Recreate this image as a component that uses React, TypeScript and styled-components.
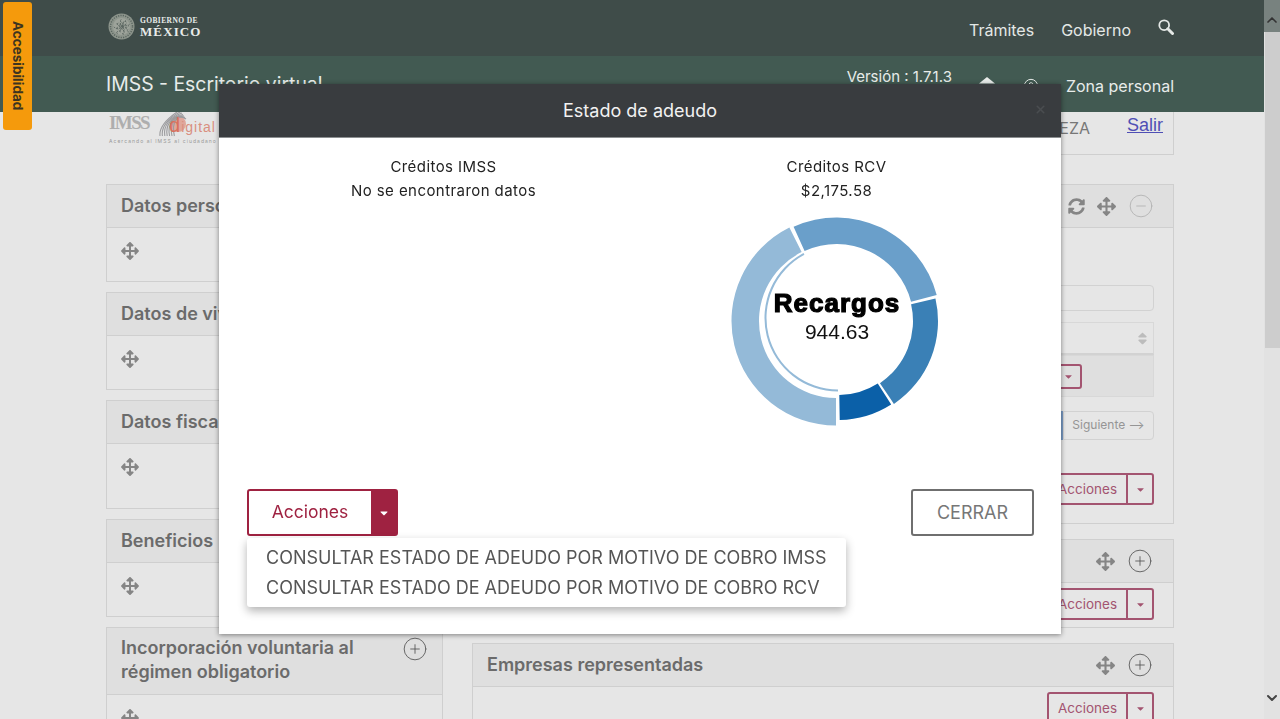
import React from 'react';
import styled, { createGlobalStyle } from 'styled-components';
import { FaArrowsAlt, FaSyncAlt, FaCaretDown, FaSort } from 'react-icons/fa';
import { CirclePlus, CircleMinus, CircleHelp, ChevronUp, ChevronDown, X } from 'lucide-react';

const GlobalStyle = createGlobalStyle`
  html, body {
    margin: 0;
    padding: 0;
    height: 100%;
    overflow: hidden;
    background: #e6e6e6;
  }
  body {
    font-family: "Inter", "Open Sans", sans-serif;
  }
`;

// angles are clockwise from north
function polar(cx: number, cy: number, r: number, a: number) {
  const rad = (a * Math.PI) / 180;
  return `${(cx + r * Math.sin(rad)).toFixed(2)} ${(cy - r * Math.cos(rad)).toFixed(2)}`;
}

function ring(cx: number, cy: number, ro: number, ri: number, a0: number, a1: number) {
  const big = a1 - a0 > 180 ? 1 : 0;
  return `M${polar(cx, cy, ro, a0)} A${ro} ${ro} 0 ${big} 1 ${polar(cx, cy, ro, a1)} L${polar(cx, cy, ri, a1)} A${ri} ${ri} 0 ${big} 0 ${polar(cx, cy, ri, a0)} Z`;
}

const slices = [
  { color: '#6a9fca', cx: 109.5, cy: 110, ro: 103.5, ri: 77, from: -24.5, to: 75.5 },
  { color: '#3a80b6', cx: 111, cy: 110, ro: 100, ri: 75, from: 77, to: 146 },
  { color: '#0b60a8', cx: 111, cy: 110, ro: 99, ri: 74, from: 147.5, to: 179 },
  { color: '#94bad8', cx: 109, cy: 110, ro: 104.5, ri: 77, from: 180, to: 333.5 },
];

function Donut() {
  return (
    <svg width="222" height="222" viewBox="0 0 222 222">
      {slices.map((s) => (
        <path key={s.color} d={ring(s.cx, s.cy, s.ro, s.ri, s.from, s.to)} fill={s.color} />
      ))}
      <path d={ring(111, 107, 73.5, 71.5, 180, 332)} fill="#94bad8" />
      <ChartLabel x="110" y="101" textAnchor="middle">Recargos</ChartLabel>
      <ChartValue x="110" y="128" textAnchor="middle">944.63</ChartValue>
    </svg>
  );
}

function EmblemGob() {
  const marks = Array.from({ length: 60 }, (_, i) => i * 47);
  return (
    <svg width="27" height="27" viewBox="0 0 27 27">
      <circle cx="13.5" cy="13.5" r="13" fill="#8d958c" />
      <circle cx="13.5" cy="13.5" r="11" fill="none" stroke="#59655f" strokeWidth="1.5" strokeDasharray="1.2 1.2" />
      <circle cx="13.5" cy="13.5" r="8.5" fill="#9da39a" />
      {marks.map((a, i) => (
        <path key={a} d={`M${polar(13.5, 13.5, (i * 0.37) % 8, a)} l1.4 ${i % 2 ? 1 : -1}`} stroke="#5c6862" strokeWidth="0.9" />
      ))}
    </svg>
  );
}

function Fingerprint() {
  return (
    <svg width="30" height="26" viewBox="0 0 30 26">
      <circle cx="20" cy="12" r="8" fill="#e0a79b" />
      {[0, 1, 2, 3, 4, 5, 6].map((i) => (
        <path key={i} d={`M${2 + i * 2.4} 24 C${1 + i * 2} ${16 - i} ${8 + i * 2} ${7 - i} ${22 + i} ${-2 + i * 1.5}`} fill="none" stroke="#9b9b9e" strokeWidth="1.1" />
      ))}
    </svg>
  );
}

function RoofIcon() {
  return (
    <svg width="20" height="20" viewBox="0 0 20 20">
      <path d="M10 1 L18 7.5 L2 7.5 Z" fill="#e8ecea" />
      <path d="M4 9 H16 V18 H4 Z" fill="#e8ecea" />
    </svg>
  );
}

function SearchGlyph() {
  return (
    <svg width="16" height="16" viewBox="0 0 16 16">
      <circle cx="6.2" cy="6.2" r="4.9" fill="none" stroke="#e4e8e6" strokeWidth="1.8" />
      <path d="M9.8 9.8 L14.5 14.5" stroke="#e4e8e6" strokeWidth="3" strokeLinecap="round" />
    </svg>
  );
}

function SplitAction({ compact }: { compact?: boolean }) {
  return (
    <SplitGroup $compact={compact}>
      {!compact && <SplitMain>Acciones</SplitMain>}
      <SplitCaret><FaCaretDown size={11} /></SplitCaret>
    </SplitGroup>
  );
}

function Panel({ title, bodyHeight, tall }: { title: string; bodyHeight: number; tall?: boolean }) {
  return (
    <PanelBox>
      <PanelHead $tall={tall}>
        <PanelTitle>{title}</PanelTitle>
        <CirclePlus size={26} strokeWidth={0.8} color="#555" />
      </PanelHead>
      <LeftBody style={{ height: bodyHeight }}>
        <MoveIcon><FaArrowsAlt size={18} /></MoveIcon>
      </LeftBody>
    </PanelBox>
  );
}

function RightTools() {
  return (
    <HeadTools>
      <MoveIcon><FaArrowsAlt size={19} /></MoveIcon>
      <CirclePlus size={26} strokeWidth={0.8} color="#555" />
    </HeadTools>
  );
}

export default function App() {
  return (
    <Shell>
      <GlobalStyle />
      <Page>
        <TopNav>
          <GobLogo>
            <EmblemGob />
            <GobText>
              <GobSmall>GOBIERNO DE</GobSmall>
              <GobBig>MÉXICO</GobBig>
            </GobText>
          </GobLogo>
          <TopLinks>
            <TopLink>Trámites</TopLink>
            <TopLink>Gobierno</TopLink>
            <SearchGlyph />
          </TopLinks>
        </TopNav>
        <SubNav>
          <SubTitle>IMSS - Escritorio virtual</SubTitle>
          <SubRight>
            <Version>Versión : 1.7.1.3</Version>
            <SubIcon $gap={26}><RoofIcon /></SubIcon>
            <SubIcon $gap={27}><CircleHelp size={16} strokeWidth={1.5} /></SubIcon>
            <ZoneText>Zona personal</ZoneText>
          </SubRight>
        </SubNav>
        <Content>
          <TopRow>
            <DigitalLogo>
              <DigitalMark>
                <DigitalImss>IMSS</DigitalImss>
                <Fingerprint />
                <DigitalWord><b>d</b>igital</DigitalWord>
              </DigitalMark>
              <DigitalTag>Acercando al IMSS al ciudadano</DigitalTag>
            </DigitalLogo>
            <UserBox>
              <UserName>EZA</UserName>
              <SalirLink href="#">Salir</SalirLink>
            </UserBox>
          </TopRow>
          <Columns>
            <Column>
              <Panel title="Datos personales" bodyHeight={53} />
              <Panel title="Datos de vivienda" bodyHeight={53} />
              <Panel title="Datos fiscales" bodyHeight={64} />
              <Panel title="Beneficios" bodyHeight={53} />
              <Panel title="Incorporación voluntaria al régimen obligatorio" bodyHeight={60} tall />
            </Column>
            <Column $gap={15}>
              <PanelBox>
                <PanelHead>
                  <span />
                  <HeadTools $tight>
                    <MoveIcon><FaSyncAlt size={17} /></MoveIcon>
                    <MoveIcon><FaArrowsAlt size={19} /></MoveIcon>
                    <CircleMinus size={26} strokeWidth={0.7} color="#aaa" />
                  </HeadTools>
                </PanelHead>
                <MainBody>
                  <FakeInput />
                  <TableHead><FaSort size={15} color="#bcbcbc" /></TableHead>
                  <TableRow><SplitAction compact /></TableRow>
                  <Pager>
                    <PagerActive />
                    <PagerNext>Siguiente ⟶</PagerNext>
                  </Pager>
                  <ActionRow><SplitAction /></ActionRow>
                </MainBody>
              </PanelBox>
              <PanelBox>
                <PanelHead>
                  <span />
                  <RightTools />
                </PanelHead>
                <ActionBody><SplitAction /></ActionBody>
              </PanelBox>
              <PanelBox>
                <PanelHead>
                  <PanelTitle>Empresas representadas</PanelTitle>
                  <RightTools />
                </PanelHead>
                <ActionBody><SplitAction /></ActionBody>
              </PanelBox>
            </Column>
          </Columns>
        </Content>
      </Page>
      <ScrollTrack>
        <ScrollTop><ChevronUp size={16} strokeWidth={2.5} color="#333" /></ScrollTop>
        <ScrollThumb />
        <ScrollRest><ChevronDown size={16} strokeWidth={3} color="#444" /></ScrollRest>
      </ScrollTrack>

      <AccessTab>Accesibilidad</AccessTab>

      <Overlay>
        <Modal>
          <ModalHead>
            Estado de adeudo
            <CloseIcon><X size={13} strokeWidth={3} /></CloseIcon>
          </ModalHead>
          <ModalBody>
            <CreditCols>
              <CreditCol>
                <CreditLine>Créditos IMSS</CreditLine>
                <CreditLine>No se encontraron datos</CreditLine>
              </CreditCol>
              <CreditCol>
                <CreditLine>Créditos RCV</CreditLine>
                <CreditLine>$2,175.58</CreditLine>
                <ChartWrap><Donut /></ChartWrap>
              </CreditCol>
            </CreditCols>
            <ModalFooter>
              <MenuAnchor>
                <ModalSplit>
                  <ModalMain>Acciones</ModalMain>
                  <ModalCaret><FaCaretDown size={12} /></ModalCaret>
                </ModalSplit>
                <Dropdown>
                  <DropItem>CONSULTAR ESTADO DE ADEUDO POR MOTIVO DE COBRO IMSS</DropItem>
                  <DropItem>CONSULTAR ESTADO DE ADEUDO POR MOTIVO DE COBRO RCV</DropItem>
                </Dropdown>
              </MenuAnchor>
              <CloseButton>CERRAR</CloseButton>
            </ModalFooter>
          </ModalBody>
        </Modal>
      </Overlay>
    </Shell>
  );
}

const ChartLabel = styled.text`
  font-family: "Liberation Sans", Arial, sans-serif;
  font-size: 26px;
  font-weight: 700;
  letter-spacing: 1px;
  fill: #000;
  stroke: #000;
  stroke-width: 1.2px;
`;

const ChartValue = styled.text`
  font-family: "Liberation Sans", Arial, sans-serif;
  font-size: 21px;
  fill: #111;
`;

const Shell = styled.div`
  display: flex;
  width: 1280px;
  height: 719px;
  overflow: hidden;
  background: #e6e6e6;
`;

const Page = styled.div`
  flex: 1;
  min-width: 0;
  display: flex;
  flex-direction: column;
`;

const TopNav = styled.header`
  height: 56px;
  flex: none;
  background: #3f4c49;
  display: flex;
  align-items: center;
  justify-content: space-between;
  padding: 0 90px 0 108px;
`;

const GobLogo = styled.div`
  display: flex;
  align-items: center;
  gap: 5px;
  margin-top: -3px;
`;

const GobText = styled.div`
  display: flex;
  flex-direction: column;
  font-family: "Liberation Serif", serif;
  font-weight: 700;
  color: #e8ebe9;
`;

const GobSmall = styled.span`
  font-size: 7.5px;
  line-height: 9px;
  letter-spacing: 0.4px;
`;

const GobBig = styled.span`
  font-size: 13px;
  line-height: 13px;
  letter-spacing: 1.1px;
`;

const TopLinks = styled.nav`
  display: flex;
  align-items: center;
  gap: 27px;
  margin-top: 4px;
  svg { margin-top: -6px; }
`;

const TopLink = styled.a`
  font-size: 16px;
  color: #e4e8e6;
`;

const SubNav = styled.div`
  height: 56px;
  flex: none;
  background: #425a52;
  display: flex;
  align-items: center;
  justify-content: space-between;
  padding: 0 90px 0 106px;
  color: #e8ecea;
`;

const SubTitle = styled.span`
  font-size: 19.4px;
`;

const SubRight = styled.div`
  display: flex;
  align-items: center;
  margin-top: 3px;
`;

const Version = styled.span`
  font-size: 15px;
  margin: -19px 25px 0 0;
`;

const SubIcon = styled.span<{ $gap: number }>`
  display: flex;
  color: #e8ecea;
  margin-right: ${(p) => p.$gap}px;
`;

const ZoneText = styled.span`
  font-size: 16px;
`;

const Content = styled.main`
  flex: 1;
  padding: 0 90px 0 106px;
`;

const TopRow = styled.div`
  display: flex;
  justify-content: space-between;
  height: 43px;
`;

const DigitalLogo = styled.div`
  padding-left: 3px;
  display: flex;
  flex-direction: column;
`;

const DigitalMark = styled.div`
  display: flex;
  align-items: flex-start;
  height: 26px;
  overflow: hidden;
`;

const DigitalImss = styled.span`
  font-family: "Liberation Serif", serif;
  font-size: 19px;
  font-weight: 700;
  letter-spacing: -1.6px;
  line-height: 22px;
  color: #aeaeae;
  margin-right: 9px;
`;

const DigitalWord = styled.span`
  font-family: "Liberation Sans", sans-serif;
  font-size: 14px;
  line-height: 26px;
  letter-spacing: 1px;
  color: #d98f80;
  margin-left: -19px;
  b { color: #d8705c; font-size: 20px; font-weight: 400; }
`;

const DigitalTag = styled.span`
  font-size: 5px;
  line-height: 7px;
  letter-spacing: 1.05px;
  color: #999;
  white-space: nowrap;
`;

const UserBox = styled.div`
  width: 702px;
  box-sizing: border-box;
  border: 1px solid #cfcfcf;
  border-top: 0;
  display: flex;
  align-items: center;
  justify-content: flex-end;
  gap: 37px;
  padding: 0 10px 15px 0;
`;

const UserName = styled.span`
  font-size: 16px;
  color: #777;
  margin-top: 4px;
`;

const SalirLink = styled.a`
  font-family: "Liberation Sans", sans-serif;
  font-size: 18px;
  color: #4f4fb5;
  text-decoration: underline;
`;

const Columns = styled.div`
  display: grid;
  grid-template-columns: 337px 702px;
  gap: 29px;
  margin-top: 29px;
`;

const Column = styled.div<{ $gap?: number }>`
  display: flex;
  flex-direction: column;
  gap: ${(p) => p.$gap ?? 10}px;
`;

const PanelBox = styled.section`
  border: 1px solid #cfcfcf;
  background: #e6e6e6;
`;

const PanelHead = styled.div<{ $tall?: boolean }>`
  min-height: 43px;
  box-sizing: border-box;
  display: flex;
  justify-content: space-between;
  align-items: ${(p) => (p.$tall ? 'flex-start' : 'center')};
  padding: ${(p) => (p.$tall ? '8px 14px 10px' : '0 20px 0 14px')};
  background: #dfdfdf;
  border-bottom: 1px solid #cfcfcf;
`;

const PanelTitle = styled.h3`
  margin: 0;
  max-width: 262px;
  font-size: 18px;
  line-height: 24px;
  font-weight: 600;
  color: #6b6b6b;
`;

const LeftBody = styled.div`
  padding: 14px 14px 0;
  box-sizing: border-box;
`;

const MoveIcon = styled.span`
  display: flex;
  color: #858585;
`;

const HeadTools = styled.div<{ $tight?: boolean }>`
  display: flex;
  align-items: center;
  gap: ${(p) => (p.$tight ? 12 : 12)}px;
  margin-right: ${(p) => (p.$tight ? -1 : 0)}px;
`;

const MainBody = styled.div`
  height: 295px;
  box-sizing: border-box;
  padding: 57px 19px 0;
  display: flex;
  flex-direction: column;
`;

const FakeInput = styled.div`
  height: 26px;
  box-sizing: border-box;
  border: 1px solid #d2d2d2;
  border-radius: 4px;
`;

const TableHead = styled.div`
  height: 33px;
  margin-top: 11px;
  box-sizing: border-box;
  border: 1px solid #d8d8d8;
  border-bottom: 2px solid #d2d2d2;
  display: flex;
  align-items: center;
  justify-content: flex-end;
  padding-right: 3px;
`;

const TableRow = styled.div`
  height: 42px;
  box-sizing: border-box;
  background: #dfdfdf;
  border: 1px solid #d8d8d8;
  display: flex;
  align-items: center;
  justify-content: flex-end;
  padding-right: 71px;
`;

const Pager = styled.div`
  display: flex;
  justify-content: flex-end;
  margin-top: 14px;
  height: 29px;
`;

const PagerActive = styled.span`
  width: 26px;
  background: #7a9cc6;
`;

const PagerNext = styled.span`
  width: 91px;
  box-sizing: border-box;
  border: 1px solid #d2d2d2;
  border-radius: 0 4px 4px 0;
  display: flex;
  align-items: center;
  justify-content: center;
  padding-bottom: 2px;
  font-size: 12px;
  color: #959595;
`;

const ActionRow = styled.div`
  display: flex;
  justify-content: flex-end;
  margin-top: 33px;
`;

const ActionBody = styled.div`
  height: 44px;
  box-sizing: border-box;
  padding: 5px 19px 0;
  display: flex;
  justify-content: flex-end;
`;

const SplitGroup = styled.div<{ $compact?: boolean }>`
  display: flex;
  height: ${(p) => (p.$compact ? 25 : 32)}px;
  box-sizing: border-box;
  border: 2px solid #a35470;
  border-radius: 3px;
  color: #a35470;
`;

const SplitMain = styled.span`
  width: 77px;
  display: flex;
  align-items: center;
  justify-content: center;
  font-size: 13.5px;
  border-right: 2px solid #a35470;
`;

const SplitCaret = styled.span`
  width: 24px;
  display: flex;
  align-items: center;
  justify-content: center;
`;

const ScrollTrack = styled.div`
  width: 16px;
  flex: none;
  display: flex;
  flex-direction: column;
  background: #e2e2e2;
`;

const ScrollTop = styled.div`
  height: 32px;
  background: #78827f;
  display: flex;
  align-items: flex-end;
  justify-content: center;
  padding-bottom: 4px;
  box-sizing: border-box;
`;

const ScrollThumb = styled.div`
  height: 316px;
  margin-left: 1px;
  background: #cdcdcd;
`;

const ScrollRest = styled.div`
  flex: 1;
  display: flex;
  align-items: flex-end;
  justify-content: center;
  padding-bottom: 13px;
`;

const AccessTab = styled.div`
  position: fixed;
  left: 3px;
  top: 2px;
  width: 29px;
  height: 128px;
  box-sizing: border-box;
  background: #f59a0c;
  border-radius: 3px;
  writing-mode: vertical-rl;
  display: flex;
  align-items: center;
  justify-content: center;
  font-size: 13.5px;
  font-weight: 700;
  color: #3d3420;
`;

const Overlay = styled.div`
  position: fixed;
  inset: 0;
  display: flex;
  justify-content: center;
  padding-top: 84px;
  box-sizing: border-box;
`;

const Modal = styled.div`
  width: 842px;
  height: 550px;
  background: #fff;
  box-shadow: 0 1px 5px rgba(0, 0, 0, 0.45);
  display: flex;
  flex-direction: column;
`;

const ModalHead = styled.div`
  height: 54px;
  flex: none;
  box-sizing: border-box;
  position: relative;
  background: #393c3f;
  border-bottom: 1px solid #8c8f91;
  display: flex;
  align-items: center;
  justify-content: center;
  font-size: 18px;
  color: #f2f2f2;
`;

const CloseIcon = styled.span`
  position: absolute;
  right: 14px;
  top: 19px;
  display: flex;
  color: #4a4d50;
`;

const ModalBody = styled.div`
  flex: 1;
  padding: 0 27px 0 28px;
  display: flex;
  flex-direction: column;
`;

const CreditCols = styled.div`
  display: grid;
  grid-template-columns: 393px 393px;
  height: 351px;
  padding-top: 17px;
  box-sizing: border-box;
`;

const CreditCol = styled.div`
  display: flex;
  flex-direction: column;
  align-items: center;
`;

const CreditLine = styled.p`
  margin: 0;
  font-size: 15px;
  letter-spacing: 0.43px;
  line-height: 24px;
  color: #222;
`;

const ChartWrap = styled.div`
  margin: 8px 0 0 3px;
  display: flex;
`;

const ModalFooter = styled.div`
  display: flex;
  justify-content: space-between;
  align-items: flex-start;
`;

const MenuAnchor = styled.div`
  position: relative;
`;

const ModalSplit = styled.div`
  display: flex;
  width: 151px;
  height: 47px;
  box-sizing: border-box;
  border: 2px solid #9f2241;
  border-radius: 3px;
`;

const ModalMain = styled.span`
  flex: 1;
  display: flex;
  align-items: center;
  justify-content: center;
  padding-bottom: 2px;
  font-size: 17.5px;
  color: #9f2241;
`;

const ModalCaret = styled.span`
  width: 25px;
  display: flex;
  align-items: center;
  justify-content: center;
  background: #9f2241;
  color: #fff;
`;

const Dropdown = styled.div`
  position: absolute;
  top: 49px;
  left: 0;
  width: 599px;
  height: 69px;
  box-sizing: border-box;
  padding: 5px 19px;
  background: #fff;
  border-radius: 3px;
  box-shadow: 0 4px 10px rgba(0, 0, 0, 0.3);
`;

const DropItem = styled.div`
  font-size: 18px;
  line-height: 30px;
  color: #555;
  white-space: nowrap;
`;

const CloseButton = styled.button`
  width: 123px;
  height: 47px;
  background: #fff;
  border: 2px solid #6f6f6f;
  border-radius: 3px;
  font-family: inherit;
  font-size: 18px;
  color: #777;
`;
